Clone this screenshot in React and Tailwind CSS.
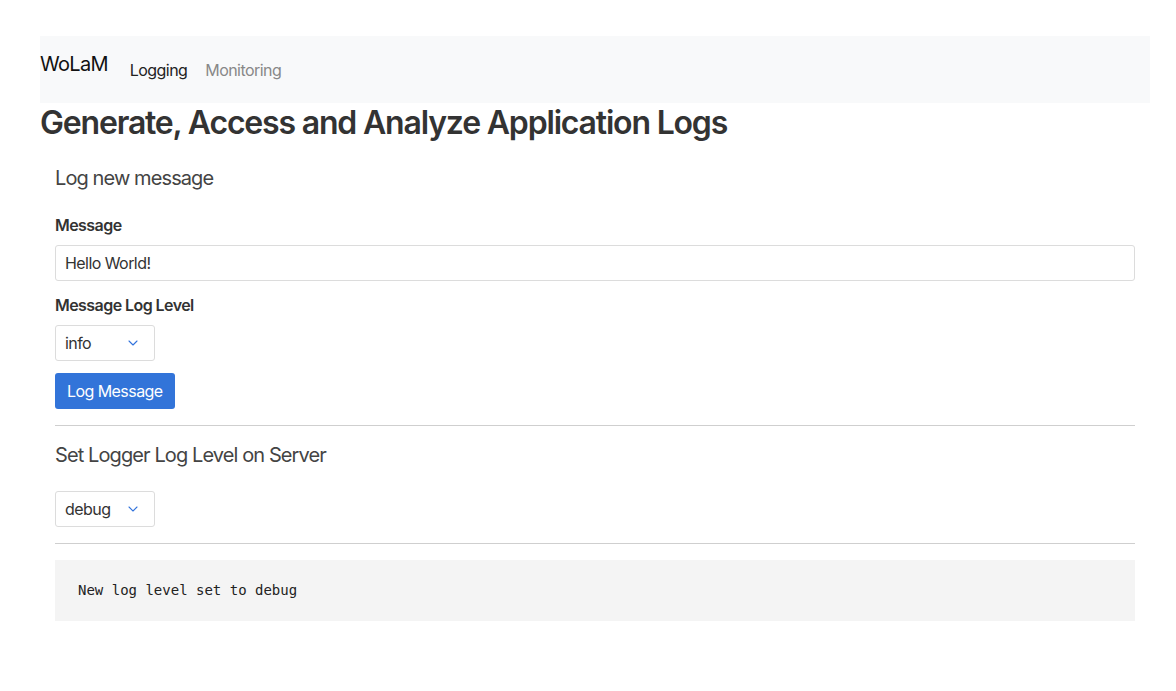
import { ChevronDown } from "lucide-react";

function Select({ value }) {
  return (
    <div className="flex items-center justify-between w-[100px] h-[36px] pl-[9px] pr-[13px] border border-[#dcdcdc] rounded-[3px] bg-white text-[16px] tracking-[-0.035em] text-[#333]">
      <span>{value}</span>
      <ChevronDown size={16} strokeWidth={1.6} className="text-[#3273dc]" />
    </div>
  );
}

export default function App() {
  return (
    <div className="min-h-[691px] bg-white pt-[36px] pl-[40px] pr-[26px] font-['Inter',sans-serif] text-[#333]">
      {/* Navbar */}
      <nav className="flex items-center h-[67px] bg-[#f8f9fa]">
        <span className="text-[20px] tracking-[-0.035em] text-[#111] mb-[12px]">WoLaM</span>
        <span className="ml-[22px] text-[16px] tracking-[-0.035em] text-[#222]">Logging</span>
        <span className="ml-[18px] text-[16px] tracking-[-0.035em] text-[#888]">Monitoring</span>
      </nav>

      <h1 className="text-[32px] font-semibold leading-[40px] tracking-[-0.037em] text-[#333]">
        Generate, Access and Analyze Application Logs
      </h1>

      <div className="px-[15px]">
        <h2 className="mt-[23px] text-[20px] leading-[24px] tracking-[-0.045em] text-[#444]">Log new message</h2>

        <label className="block mt-[25px] text-[16px] font-semibold leading-[20px] tracking-[-0.035em]">Message</label>
        <div className="mt-[10px] flex items-center h-[36px] px-[9px] border border-[#dcdcdc] rounded-[3px] text-[16px] tracking-[-0.035em] text-[#333]">
          Hello World!
        </div>

        <label className="block mt-[14px] text-[16px] font-semibold leading-[20px] tracking-[-0.035em]">Message Log Level</label>
        <div className="mt-[10px]">
          <Select value="info" />
        </div>

        <button className="mt-[12px] h-[36px] px-[12px] rounded-[3px] bg-[#3274d9] text-white text-[16px] tracking-[-0.035em]">
          Log Message
        </button>

        <hr className="mt-[16px] border-t border-[#cfcfcf]" />

        <h2 className="mt-[17px] text-[20px] leading-[24px] tracking-[-0.045em] text-[#444]">Set Logger Log Level on Server</h2>
        <div className="mt-[24px]">
          <Select value="debug" />
        </div>

        <hr className="mt-[16px] border-t border-[#cfcfcf]" />

        <pre className="mt-[16px] h-[61px] flex items-center px-[23px] bg-[#f4f4f4] font-['DejaVu_Sans_Mono',monospace] text-[14px] text-[#222]">
          New log level set to debug
        </pre>
      </div>
    </div>
  );
}
